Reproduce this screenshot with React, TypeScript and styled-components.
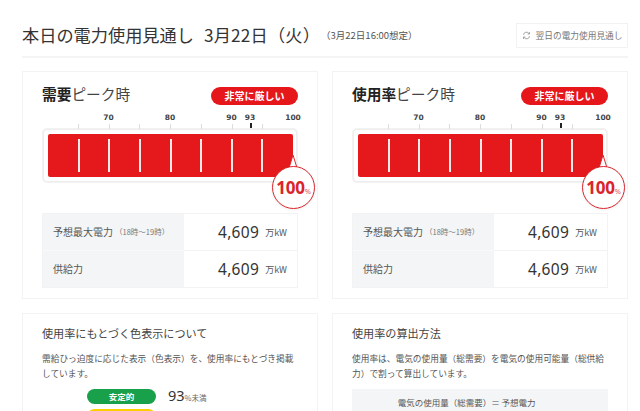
import React from "react";
import styled, { createGlobalStyle } from "styled-components";

const GlobalStyle = createGlobalStyle`
  html, body {
    margin: 0;
    height: 411px;
    overflow: hidden;
    background: #fff;
    color: #333;
    font-family: "Noto Sans CJK JP", "Noto Sans", sans-serif;
  }
  * { box-sizing: border-box; }
`;

const Page = styled.div`
  width: 640px;
  height: 411px;
  overflow: hidden;
  padding: 0 12px 0 22px;
`;

const Header = styled.header`
  display: flex;
  align-items: center;
  height: 58px;
  padding-top: 23px;
  padding-bottom: 9px;
  border-bottom: 2px solid #f4f4f4;
  margin-bottom: 13px;
`;

const Title = styled.h1`
  margin: 0;
  font-size: 17.2px;
  line-height: 24px;
  font-weight: 400;
  color: #333;
`;

const TitleDate = styled.span`
  margin-left: 10px;
  letter-spacing: 0.2px;
`;

const Assumed = styled.span`
  margin-left: 1px;
  font-size: 9.5px;
  color: #555;
`;

const NextButton = styled.div`
  margin-left: auto;
  width: 112px;
  height: 25px;
  display: flex;
  align-items: center;
  justify-content: center;
  gap: 5px;
  border: 1px solid #f2f2f2;
  font-size: 8.7px;
  color: #777;
`;

const Grid = styled.div`
  display: grid;
  grid-template-columns: 296px 296px;
  column-gap: 14px;
  row-gap: 14px;
`;

const Card = styled.section`
  border: 1px solid #f3f3f3;
  padding: 12px 19px 11px 19px;
  height: 228px;
`;

const LowerCard = styled(Card)`
  height: 120px;
  padding-top: 10px;
`;

const CardHead = styled.div`
  display: flex;
  align-items: center;
  justify-content: space-between;
  height: 22px;
`;

const CardTitle = styled.h2`
  margin: -4px 0 0;
  font-size: 14.7px;
  font-weight: 400;
  color: #444;
  strong {
    font-weight: 700;
    color: #222;
  }
`;

const Badge = styled.div`
  width: 87px;
  height: 18px;
  margin-top: 1px;
  border-radius: 9px;
  background: #e6171b;
  color: #fff;
  font-size: 10px;
  font-weight: 700;
  line-height: 18px;
  text-align: center;
`;

const Meter = styled.div`
  position: relative;
  height: 92px;
  padding-top: 23px;
`;

const Scale = styled.div`
  position: absolute;
  left: 5px;
  right: 5px;
  top: 0;
  height: 29px;
`;

const ScaleLabel = styled.span<{ $at: number }>`
  position: absolute;
  left: ${(p) => p.$at}%;
  top: 7px;
  transform: translateX(-50%);
  font-family: "DejaVu Sans", sans-serif;
  font-size: 7.5px;
  font-weight: 700;
  color: #444;
`;

const ScaleTick = styled.i<{ $at: number }>`
  position: absolute;
  left: ${(p) => p.$at}%;
  top: 18px;
  width: 1px;
  height: 5px;
  background: #ddd;
`;

const NowTick = styled.i<{ $at: number }>`
  position: absolute;
  left: ${(p) => p.$at}%;
  top: 17px;
  width: 2px;
  height: 5px;
  background: #222;
`;

const BarFrame = styled.div`
  height: 53px;
  margin: 0 1px;
  padding: 4px 3px 4px 4px;
  border: 1px solid #eee;
  border-radius: 4px;
  background: #fff;
  box-shadow: 0 0 0 1px #f2f2f2;
`;

const BarFill = styled.div`
  position: relative;
  height: 100%;
  border-radius: 2px;
  background: #e5191b;
`;

const BarLine = styled.i<{ $at: number }>`
  position: absolute;
  left: ${(p) => p.$at}%;
  top: 5px;
  bottom: 5px;
  width: 2px;
  margin-left: -1px;
  background: #f6eaea;
`;

const Bubble = styled.div`
  position: absolute;
  left: 230px;
  top: 60px;
  width: 43px;
  height: 43px;
  border: 1px solid #d9252b;
  border-radius: 50%;
  background: #fff;
  display: flex;
  align-items: center;
  justify-content: center;
  font-family: "Noto Sans", sans-serif;
  font-size: 17px;
  font-weight: 700;
  letter-spacing: -0.2px;
  color: #d9252b;
  box-shadow: 0 1px 3px rgba(0, 0, 0, 0.08);
  small {
    font-size: 7.5px;
    font-weight: 400;
    margin-top: 6px;
    color: #e0555a;
  }
`;

const BubbleTail = styled.svg`
  position: absolute;
  left: 247px;
  top: 49px;
`;

const Table = styled.div`
  margin-top: 15px;
  border: 1px solid #f3f3f3;
  display: grid;
  grid-template-columns: 141px 1fr;
`;

const Label = styled.div<{ $last?: boolean }>`
  height: 36.5px;
  padding-left: 10px;
  display: flex;
  align-items: center;
  background: #f4f5f6;
  font-size: 10px;
  color: #555;
  border-bottom: ${(p) => (p.$last ? "none" : "1px solid #fafafa")};
  small {
    font-size: 7.5px;
    margin-left: 2px;
    color: #777;
  }
`;

const Value = styled.div<{ $last?: boolean }>`
  height: 36.5px;
  padding-right: 10px;
  display: flex;
  align-items: center;
  justify-content: flex-end;
  gap: 6px;
  font-family: "Noto Sans", sans-serif;
  font-size: 15.5px;
  letter-spacing: 0.3px;
  color: #333;
  border-bottom: ${(p) => (p.$last ? "none" : "1px solid #f3f3f3")};
  small {
    font-family: "Noto Sans CJK JP", sans-serif;
    font-size: 9px;
    letter-spacing: 0;
    color: #555;
    margin-top: 2px;
  }
`;

const LowerTitle = styled.h3`
  margin: 0 0 9px;
  font-size: 11.1px;
  line-height: 18px;
  font-weight: 400;
  color: #444;
`;

const Body = styled.p`
  margin: 0;
  font-size: 8.7px;
  line-height: 15px;
  color: #555;
`;

const LevelList = styled.div`
  margin-top: 7px;
  padding-left: 45px;
  display: flex;
  flex-direction: column;
  gap: 3px;
`;

const Level = styled.div`
  display: flex;
  align-items: center;
  gap: 12px;
`;

const Pill = styled.div<{ $bg: string; $fg: string }>`
  width: 69px;
  height: 15px;
  border-radius: 8px;
  background: ${(p) => p.$bg};
  color: ${(p) => p.$fg};
  font-size: 8.5px;
  font-weight: 700;
  line-height: 15px;
  text-align: center;
`;

const Range = styled.div`
  font-family: "Noto Sans", sans-serif;
  font-size: 14.5px;
  line-height: 15px;
  color: #333;
  small {
    font-family: "Noto Sans CJK JP", sans-serif;
    font-size: 7.5px;
    color: #666;
  }
`;

const FormulaBox = styled.div`
  margin-top: 8px;
  height: 40px;
  display: flex;
  justify-content: center;
  gap: 24px;
  padding: 7px 0 0 20px;
  background: #f4f5f6;
  font-size: 8.5px;
  color: #555;
  span:last-child {
    margin-top: 12px;
  }
`;

const ticks = [12.5, 25, 37.5, 50, 62.5, 75, 87.5];
const labels = [
  { text: "70", at: 25 },
  { text: "80", at: 50 },
  { text: "90", at: 75 },
  { text: "93", at: 82.5 },
  { text: "100", at: 100 },
];

const RefreshIcon = () => (
  <svg width="9" height="9" viewBox="0 0 12 12" fill="none" stroke="#999" strokeWidth="1.2">
    <path d="M2 5a4 4 0 0 1 7-2l1 1" />
    <path d="M10 7a4 4 0 0 1-7 2L2 8" />
    <path d="M10 1.5V4H7.5M2 10.5V8h2.5" />
  </svg>
);

const PeakCard = ({ title }: { title: React.ReactNode }) => (
  <Card>
    <CardHead>
      <CardTitle>{title}</CardTitle>
      <Badge>非常に厳しい</Badge>
    </CardHead>
    <Meter>
      <Scale>
        {labels.map((l) => (
          <ScaleLabel key={l.text} $at={l.at}>
            {l.text}
          </ScaleLabel>
        ))}
        {ticks.map((t) => (
          <ScaleTick key={t} $at={t} />
        ))}
        <NowTick $at={82.5} />
      </Scale>
      <BarFrame>
        <BarFill>
          {ticks.map((t) => (
            <BarLine key={t} $at={t} />
          ))}
        </BarFill>
      </BarFrame>
      <BubbleTail width="8" height="13" viewBox="0 0 8 13">
        <path d="M4 0 L8 13 L0 13 Z" fill="#fff" stroke="#d9252b" strokeWidth="1" />
      </BubbleTail>
      <Bubble>
        100<small>%</small>
      </Bubble>
    </Meter>
    <Table>
      <Label>
        予想最大電力<small>（18時～19時）</small>
      </Label>
      <Value>
        4,609<small>万kW</small>
      </Value>
      <Label $last>供給力</Label>
      <Value $last>
        4,609<small>万kW</small>
      </Value>
    </Table>
  </Card>
);

export default function App() {
  return (
    <Page>
      <GlobalStyle />
      <Header>
        <Title>
          本日の電力使用見通し<TitleDate>3月22日（火）</TitleDate>
        </Title>
        <Assumed>（3月22日16:00想定）</Assumed>
        <NextButton>
          <RefreshIcon />
          翌日の電力使用見通し
        </NextButton>
      </Header>
      <Grid>
        <PeakCard
          title={
            <>
              <strong>需要</strong>ピーク時
            </>
          }
        />
        <PeakCard
          title={
            <>
              <strong>使用率</strong>ピーク時
            </>
          }
        />
        <LowerCard>
          <LowerTitle>使用率にもとづく色表示について</LowerTitle>
          <Body>需給ひっ迫度に応じた表示（色表示）を、使用率にもとづき掲載しています。</Body>
          <LevelList>
            <Level>
              <Pill $bg="#18a04a" $fg="#fff">安定的</Pill>
              <Range>
                93<small>%未満</small>
              </Range>
            </Level>
            <Level>
              <Pill $bg="#fbd000" $fg="#333">やや厳しい</Pill>
              <Range>
                93<small>%以上</small> 95<small>%未満</small>
              </Range>
            </Level>
          </LevelList>
        </LowerCard>
        <LowerCard>
          <LowerTitle>使用率の算出方法</LowerTitle>
          <Body>使用率は、電気の使用量（総需要）を電気の使用可能量（総供給力）で割って算出しています。</Body>
          <FormulaBox>
            <span>電気の使用量（総需要）＝ 予想電力</span>
            <span>×100</span>
          </FormulaBox>
        </LowerCard>
      </Grid>
    </Page>
  );
}
